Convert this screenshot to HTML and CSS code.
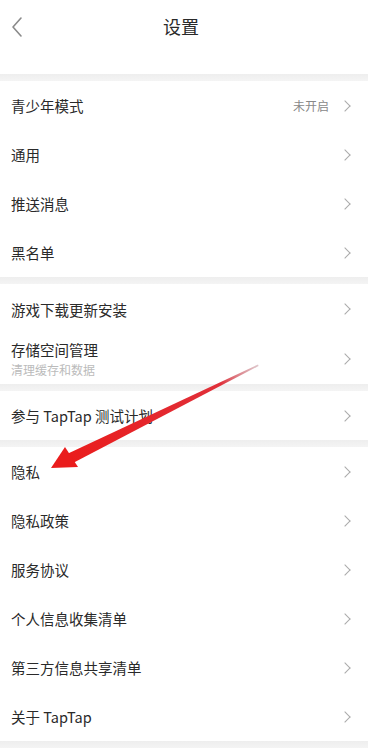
FILE: index.html
```html
<!DOCTYPE html>
<html lang="zh-CN">
<head>
  <meta charset="UTF-8">
  <title>设置</title>
  <link rel="stylesheet" href="styles.css">
</head>
<body>

<div class="page">
  <div class="header">
    <svg class="back" width="14" height="22" viewBox="0 0 14 22"><path d="M11 2 L3 11 L11 20" fill="none" stroke="#8a8a8a" stroke-width="1.6" stroke-linecap="round" stroke-linejoin="round"/></svg>
    <div class="title">设置</div>
  </div>

  <div class="gap"></div>
  <div class="group">
    <div class="row"><span class="label">青少年模式</span><span class="value">未开启</span><i class="chev"></i></div>
    <div class="row"><span class="label">通用</span><i class="chev"></i></div>
    <div class="row"><span class="label">推送消息</span><i class="chev"></i></div>
    <div class="row"><span class="label">黑名单</span><i class="chev"></i></div>
  </div>

  <div class="gap"></div>
  <div class="group">
    <div class="row tall"><span class="label">游戏下载更新安装</span><i class="chev"></i></div>
    <div class="row tall">
      <div class="label-wrap">
        <span class="label">存储空间管理</span>
        <span class="sub">清理缓存和数据</span>
      </div>
      <i class="chev"></i>
    </div>
  </div>

  <div class="gap"></div>
  <div class="group">
    <div class="row"><span class="label">参与 TapTap 测试计划</span><i class="chev"></i></div>
  </div>

  <div class="gap"></div>
  <div class="group">
    <div class="row"><span class="label">隐私</span><i class="chev"></i></div>
    <div class="row"><span class="label">隐私政策</span><i class="chev"></i></div>
    <div class="row"><span class="label">服务协议</span><i class="chev"></i></div>
    <div class="row"><span class="label">个人信息收集清单</span><i class="chev"></i></div>
    <div class="row"><span class="label">第三方信息共享清单</span><i class="chev"></i></div>
    <div class="row"><span class="label">关于 TapTap</span><i class="chev"></i></div>
  </div>
  <div class="gap"></div>

  <!-- red annotation arrow -->
  <svg class="arrow" width="382" height="750" viewBox="0 0 382 750">
    <defs>
      <linearGradient id="shaft" x1="258" y1="365" x2="70" y2="458" gradientUnits="userSpaceOnUse">
        <stop offset="0" stop-color="#c9a0a8" stop-opacity="0.6"/>
        <stop offset="0.2" stop-color="#e0303a"/>
        <stop offset="1" stop-color="#ea1c1c"/>
      </linearGradient>
    </defs>
    <polygon points="258,364.5 258.6,366 73,463 67,454" fill="url(#shaft)"/>
    <polygon points="51,468 65,447 78,467" fill="#ea1c1c"/>
  </svg>
</div>

</body>
</html>
```

FILE: styles.css
```css
body {
  margin: 0;
  background: #fff;
  font-family: "Noto Sans CJK SC", "Noto Sans", sans-serif;
  color: #333;
}

.page {
  width: 368px;
  height: 750px;
  overflow: hidden;
}

.header {
  height: 74px;
  display: flex;
  align-items: flex-start;
  justify-content: center;
  position: relative;
}

.back {
  position: absolute;
  left: 10px;
  top: 16px;
}

.title {
  margin-top: 12px;
  margin-right: 6px;
  font-size: 18px;
  line-height: 28px;
  color: #2a2a2a;
}

.gap {
  height: 7px;
  background: linear-gradient(to bottom, #eeeeee, #f4f4f4);
}

.row {
  height: 49px;
  display: flex;
  align-items: center;
  padding: 0 16px 0 11px;
}

.row.tall { height: 50px; }

.label {
  font-size: 14.5px;
  color: #2a2a2a;
  flex: 1;
}

.label-wrap {
  flex: 1;
  display: flex;
  flex-direction: column;
  line-height: 20px;
  padding-top: 2px;
}

.sub {
  font-size: 12px;
  color: #bbb;
}

.value {
  font-size: 12px;
  color: #888;
  margin-right: 12px;
}

.chev {
  width: 7px;
  height: 7px;
  border-top: 1.5px solid #aaa;
  border-right: 1.5px solid #aaa;
  transform: rotate(45deg);
  margin-right: 3px;
}

.arrow {
  position: absolute;
  left: 0;
  top: 0;
  pointer-events: none;
}
```
